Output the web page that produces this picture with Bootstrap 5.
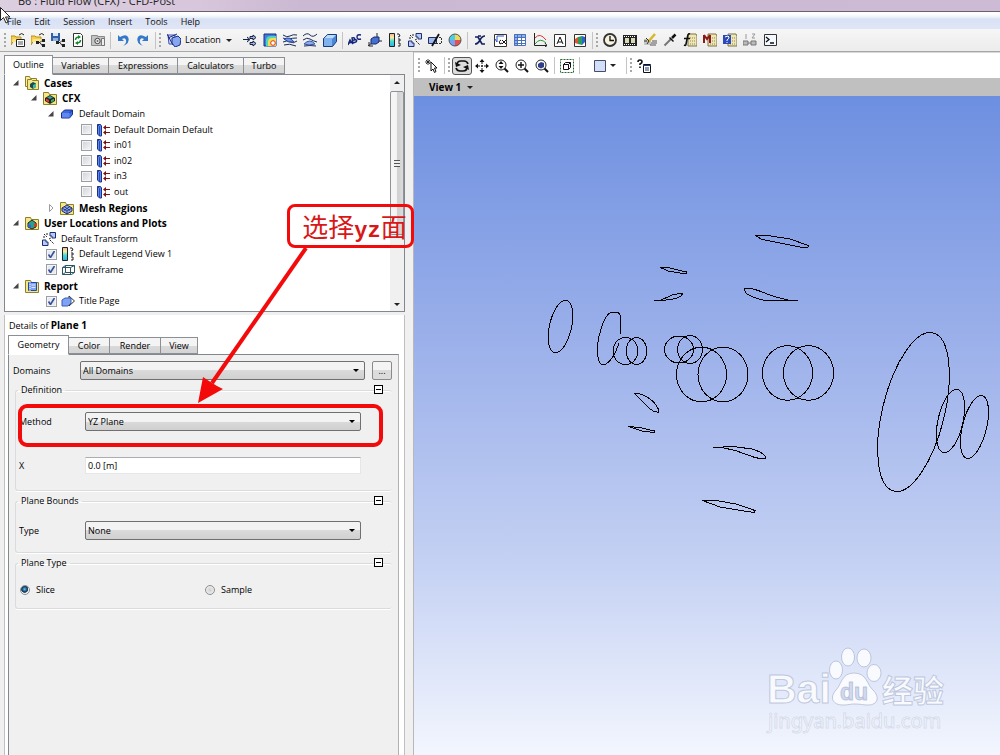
<!DOCTYPE html>
<html lang="en">
<head>
<meta charset="utf-8">
<meta name="viewport" content="width=device-width, initial-scale=1">
<title>B6 : Fluid Flow (CFX) - CFD-Post</title>
<link href="https://cdn.jsdelivr.net/npm/bootstrap@5.3.0/dist/css/bootstrap.min.css" rel="stylesheet">
<style>
  body { font: 9px/14px "Open Sans", "Noto Sans CJK SC", sans-serif; color: #000; background: #f0f0f0; overflow-x: hidden; }
  b, .tree-head { font-size: 10px; font-weight: 700; }
  button, select, input { font: inherit; color: inherit; }
  .title-strip { height: 12px; background: linear-gradient(90deg, #dccfe0, #d8c6dc 20%, #cbb8d2 30%, #cdbad4); border-bottom: 1px solid #6a6070; padding-left: 18px; }
  .title-strip span { font-size: 11px; line-height: 12px; margin-bottom: 4px; white-space: nowrap; color: #222; }
  .menu-strip { height: 17px; background: linear-gradient(#fff 0 2px, #eef2fb 5px, #d9e1f4 7px, #dfe6f7); gap: 13px; padding: 2px 7px 0; }
  .menu-strip a { color: #111; text-decoration: none; }
  .tool-strip { height: 23px; background: linear-gradient(#f6f6f6, #ececec); border-bottom: 1px solid #a8a8a8; padding-left: 3px; }
  .tool { width: 20px; height: 20px; padding: 0; border: 0; background: none; display: grid; place-items: center; flex: none; }
  .tool svg, .pic { width: 14px; height: 14px; flex: none; display: block; }
  .tool.pressed { border: 1px solid #555; border-radius: 3px; background: #ddd; height: 18px; }
  .wide-tool { width: 77px; display: flex; align-items: center; gap: 4px; padding: 0 4px; }
  .rule { width: 5px; height: 17px; flex: none; background: linear-gradient(90deg, transparent 2px, #c4c4c4 2px 3px, transparent 3px); }
  .grip { width: 5px; height: 17px; flex: none; background: radial-gradient(circle at 2px 2px, #a8a8a8 1px, transparent 1px) 0 0 / 5px 4px; }
  .caret { width: 0; height: 0; border: 3px solid transparent; border-top-color: #222; border-bottom: 0; flex: none; }
  .side { flex: 0 0 41.4%; padding: 3px 8px 0 4px; border-right: 1px solid #b8b8b8; }
  .tab-row { align-items: end; position: relative; z-index: 1; }
  .tab-row button { height: 17px; padding: 0; border: 1px solid #8c8f94; border-left-width: 0; background: linear-gradient(#f4f4f4 50%, #dadada 50%, #d4d4d4); line-height: 14px; flex: none; }
  .tab-row .picked { height: 20px; background: #fff; border-left-width: 1px; border-bottom-color: #fff; margin-bottom: -1px; }
  .w-a { width: 49px; } .w-b { width: 56px; } .w-c { width: 69px; } .w-d { width: 66px; } .w-e { width: 41px; }
  .w-f { width: 61px; } .w-g { width: 41px; } .w-h { width: 51px; } .w-i { width: 37px; }
  .tree-box { height: 238px; background: #fff; border: 1px solid #828790; }
  .tree { margin: 0 0 2px; }
  .tree li { flex: 1 1 0; display: flex; align-items: center; gap: 5px; min-height: 0; white-space: nowrap; }
  .d1 { padding-left: 7px; } .d2 { padding-left: 25px; } .d3 { padding-left: 42px; } .d4 { padding-left: 76px; } .d5 { padding-left: 37px; } .d6 { padding-left: 41px; }
  .tree li svg.twig { width: 8px; height: 8px; flex: none; }
  .tree label { display: flex; align-items: center; gap: 4px; }
  .tick { appearance: none; width: 11px; height: 11px; margin: 0; border: 1px solid #9a9ea6; flex: none; background: linear-gradient(135deg, #cfd2d6, #f6f6f6); box-shadow: inset 0 0 0 1px #f4f4f4; }
  .tick:checked { background: url("data:image/svg+xml,%3Csvg xmlns='http://www.w3.org/2000/svg' viewBox='0 0 9 9'%3E%3Cpath d='M1.5 4.5 3.5 7.5 7.5 1' fill='none' stroke='%23384f96' stroke-width='1.6'/%3E%3C/svg%3E") center / 9px 9px, #e6e9ef; }
  .scroll { width: 14px; background: #f0f0f0; padding-bottom: 5px; }
  .scroll .caret { margin: 0 auto; }
  .up { transform: rotate(180deg); margin-top: 6px !important; }
  .thumb { height: 144px; margin: 7px 0 auto; border: 1px solid #8f9297; border-radius: 2px; background: linear-gradient(90deg, #f5f5f5 45%, #cfcfd1 55%, #dcdcdc); display: grid; place-items: center; }
  .thumb i { width: 6px; height: 7px; background: repeating-linear-gradient(#555 0 1px, #eee 1px 3px); }
  .details { background: #fff; border: 1px solid #c0c0c0; border-top: 0; border-bottom: 0; margin-top: 3px; padding: 0 5px 0 3px; }
  .details h2 { font-size: 9px; line-height: 14px; margin: 3px 1px 2px; }
  .form-area { background: #f0f0f0; border: 1px solid #828790; border-right-color: #b0b0b0; border-bottom: 0; padding: 6px 6px 0 4px; }
  .pick { appearance: none; height: 19px; flex: 1; min-width: 0; border: 1px solid #707070; border-radius: 2px; padding: 0 2px; line-height: 16px;
    background: url("data:image/svg+xml,%3Csvg xmlns='http://www.w3.org/2000/svg' viewBox='0 0 6 3'%3E%3Cpath d='M0 0h6L3 3z'/%3E%3C/svg%3E") right 5px center / 6px 3px no-repeat, linear-gradient(#f3f3f3 50%, #dadada 50%, #d0d0d0); }
  .more { width: 20px; height: 19px; border: 1px solid #8a8a8a; border-radius: 2px; padding: 0; line-height: 14px; background: linear-gradient(#f4f4f4 50%, #dcdcdc 50%); margin-left: 7px; }
  .tag { width: 67px; flex: none; }
  .group { border: 1px solid #d9dbde; border-right: 0; border-radius: 3px; box-shadow: 0 1px #fff, inset 0 1px #fff; margin: 0 0 0 2px; padding: 0 31px 0 3px; position: relative; }
  .group legend { float: none; width: auto; font-size: 9px; line-height: 14px; margin: 0 0 0 -1px; padding: 0 3px; }
  .group .tag { width: 66px; }
  .fold { position: absolute; right: 9px; top: -12px; width: 9px; height: 9px; padding: 0; border: 1px solid #000; background: linear-gradient(#000, #000) center / 5px 1px no-repeat #fff; }
  .g1 { height: 108px; margin-top: 3px; } .g2 { height: 59px; margin-top: 3px; } .g3 { height: 53px; margin-top: 3px; }
  .g1 .first { margin-top: 15px; } .g1 .second { margin-top: 26px; } .g2 .first { margin-top: 13px; } .g3 .first { margin-top: 13px; margin-right: -28px; }
  .entry { height: 17px; flex: 1; min-width: 0; border: 1px solid #e4e6ea; border-top-color: #abadb3; padding: 0 2px; background: #fff; border-radius: 0; }
  .dot { appearance: none; width: 10px; height: 10px; border: 1px solid #8b8f94; border-radius: 50%; margin: 0 6px 0 1px; background: radial-gradient(#d0d0d0, #f8f8f8); }
  .dot:checked { background: radial-gradient(circle at 45% 40%, #6fc3ea 0, #123f66 40%, #1c4a70 50%, #f4f4f4 60%); }
  .note-frame { position: absolute; left: 18px; right: 30px; top: 352px; height: 43px; border: 4px solid #f30b0b; border-radius: 9px; pointer-events: none; }
  .note-text { position: absolute; right: -1px; top: 152px; width: 127px; height: 44px; border: 3px solid #f30b0b; border-radius: 8px; color: #d81818; font: 26px/38px "Noto Sans CJK SC", sans-serif; text-align: center; padding-left: 8px; white-space: nowrap; }
  .note-text b { font: 700 22px/38px "Liberation Mono", monospace; }
  .note-arrow { position: absolute; right: 97px; top: 195px; width: 120px; height: 158px; pointer-events: none; }
  .view-tools { height: 26px; background: #fff; border-top: 1px solid #d8d8d8; padding-left: 3px; }
  .view-name { height: 18px; background: #c0c0c0; padding-left: 15px; gap: 6px; border: 0; text-align: left; }
  .canvas { background: linear-gradient(#6d8fe0, #9fb3eb 40%, #c3d0f3 70%, #f3f6fe); }
  .canvas svg { width: 100%; display: block; }
  .pointer { position: absolute; left: 0; top: 7px; width: 12px; height: 17px; }
</style>
</head>
<body class="min-vh-100 d-flex flex-column position-relative">

<svg width="0" height="0" class="position-absolute" aria-hidden="true">
  <defs>
    <linearGradient id="rain" x2="0" y2="1"><stop stop-color="#f0b0a0"/><stop offset=".3" stop-color="#f6efa0"/><stop offset=".6" stop-color="#49d7d0"/><stop offset="1" stop-color="#28b4e8"/></linearGradient>
    <symbol id="fold0" viewBox="0 0 14 14"><path d="M0 3h4l1 1h5v3H3l-3 5z" fill="#f6cf4a" stroke="#b98f16"/><path d="M2 6h9l-2 3H1z" fill="#fbe48a"/><path d="M8 2q3-3 5 0" stroke="#222" fill="none"/></symbol>
    <symbol id="i-open" viewBox="0 0 14 14"><use href="#fold0"/><path d="M5.500 6.500h8v7h-8z" fill="#fff" stroke="#222"/><path d="M7 9h5M7 11h5" stroke="#555"/></symbol>
    <symbol id="i-net" viewBox="0 0 14 14"><path d="M7 9.500h2l2-2h2M9 9.500l2 3h2" fill="none" stroke="#222"/><path d="M5 8h3v3H5zM11 6h3v3h-3zM11 11h3v3h-3z" fill="#222"/></symbol>
    <symbol id="i-openc" viewBox="0 0 14 14"><use href="#fold0"/><use href="#i-net"/></symbol>
    <symbol id="i-save" viewBox="0 0 14 14"><path d="M0 0h9v8H0z" fill="#315fa8"/><path d="M2 0h5v3H2z" fill="#dce8f8"/><path d="M2 5h5v3H2z" fill="#8eb2e0"/><use href="#i-net"/></symbol>
    <symbol id="i-fresh" viewBox="0 0 14 14"><path d="M2.500.5h7l2 2v11h-9z" fill="#fff" stroke="#333"/><path d="M4.500 7q0-3 4-3M9.500 7q0 3-4 3" fill="none" stroke="#128a28" stroke-width="1.500"/><path d="M7 2l3 2-3 2zM7 8l-3 2 3 2z" fill="#128a28"/></symbol>
    <symbol id="i-cam" viewBox="0 0 14 14"><path d="M.5 2.500h6v1h7v9H.5z" fill="#c4c4c4" stroke="#8a8a8a"/><path d="M10.500 5.500h3v7h-3z" fill="#eee" stroke="#777"/><circle cx="6.500" cy="8" r="2.700" fill="#eee" stroke="#444"/><circle cx="6.500" cy="8" r="1" fill="#666"/></symbol>
    <symbol id="i-undo" viewBox="0 0 14 14"><path d="M2 2v6h6L6 6q3-2 4 1t-3 6q7-3 5.500-8T4 4z" fill="#3577c8"/></symbol>
    <symbol id="i-loc" viewBox="0 0 14 14"><path d="M1 2h7l-1 9H2z" fill="#cfdcff" stroke="#3c4fae"/><path d="M0 1l6 11M10 1L1 5" stroke="#182a80"/><path d="M5 5l6-2 3 3-1 6-5 2-3-4z" fill="#86a6ee" stroke="#1a2f8e"/></symbol>
    <symbol id="i-vec" viewBox="0 0 14 14"><path d="M0 6.500h6M4 4l3 2.500L4 9M7 3.500h3V2l3 2.500L10 7V5.500H7zM7 9.500h3V8l3 2.500-3 2.500v-1.500H7z" fill="#9fb4e8" stroke="#18213c"/></symbol>
    <symbol id="i-cont" viewBox="0 0 14 14"><path d="M1 1h12v12H1z" fill="#3f7be0" stroke="#18307a"/><path d="M3 13V7q0-4 5-4h5v10z" fill="#4fd3c0"/><path d="M5 13V9q0-4 4-4h4v8z" fill="#f2dd4e"/><circle cx="10" cy="10" r="2.300" fill="#fff" stroke="#d33"/></symbol>
    <symbol id="i-strm" viewBox="0 0 14 14"><path d="M0 2q4 3 7 1t7-1M0 5q3 2 6 1t8-1M0 9q4-2 7 0t7-1M1 12q5-2 12 1" fill="none" stroke="#1c2c58"/><path d="M1 6q6-3 10 3-6 1-10-3z" fill="#6f95e8" stroke="#26479c"/></symbol>
    <symbol id="i-part" viewBox="0 0 14 14"><path d="M0 3q4-4 7-1t7-1M0 7q4-3 7-1t7 3M1 13q6-1 12 0" fill="none" stroke="#1c2c58"/><path d="M1 11q6-6 11 0-6 2-11 0z" fill="#8eabec" stroke="#3656a8"/></symbol>
    <symbol id="i-cube" viewBox="0 0 14 14"><path d="M.5 5.500l4-4h9v7l-4 5h-9z" fill="#4c86d8" stroke="#173a78"/><path d="M1 5.500l3.500-3.500H13L9.500 5.500z" fill="#b9dcfa"/><path d="M1 6h8v7H1z" fill="#7fb2ee"/></symbol>
    <symbol id="i-abc" viewBox="0 0 14 14"><path d="M0 12l2-5 3 4M1 10l3-1M5 10L4 5q4-1 2 2 4-1 2 2l-3 1M13 2q-4-1-4 2t4 2" fill="none" stroke="#15257c" stroke-width="1.400"/></symbol>
    <symbol id="i-axes" viewBox="0 0 14 14"><path d="M9 0v5M14 8h-4M4 10l-4 3" stroke="#222"/><path d="M3 6l3-2h5v5l-3 2H3z" fill="#456fd0" stroke="#142a6e"/><path d="M1 9v4h4" fill="none" stroke="#222"/></symbol>
    <symbol id="i-leg" viewBox="0 0 14 14"><path d="M1.500.5h5v13h-5z" fill="url(#rain)" stroke="#222"/><path d="M9 1h2l1 2-2 1M10 6h2v2h-2M10 10h2v3h-2" fill="none" stroke="#222"/></symbol>
    <symbol id="i-trans" viewBox="0 0 14 14"><path d="M8 .5h5.500V6H10V4H8zM.5 8H4v2h2v3.500H.5z" fill="#b9caf8" stroke="#1b2f6e"/><path d="M2 2l3 3M8 8l4 4M1 5h2M5 1v2M7 7l2-1" stroke="#222" stroke-dasharray="2 1"/></symbol>
    <symbol id="i-clip" viewBox="0 0 14 14"><path d="M.5 4.500h8v6h-8z" fill="#9fb8ee" stroke="#1d2f66"/><path d="M8 4.500h5.500v6H7" fill="none" stroke="#333" stroke-dasharray="2 1"/><path d="M11 1L4 13" stroke="#111" stroke-width="1.800"/></symbol>
    <symbol id="i-wheel" viewBox="0 0 14 14"><circle cx="7" cy="7" r="6" fill="#49cfe0"/><path d="M7 7V1a6 6 0 0 1 6 6z" fill="#f0d85a"/><path d="M7 7h6a6 6 0 0 1-6 6z" fill="#e65050"/><path d="M7 7v6a6 6 0 0 1-6-6z" fill="#7aa0f0"/><circle cx="7" cy="7" r="6" fill="none" stroke="#555"/></symbol>
    <symbol id="i-x" viewBox="0 0 14 14"><path d="M2 4h3l4 7h3M12 3q-3 0-5 4t-5 4M5 3h3" fill="none" stroke="#15245c" stroke-width="1.700"/></symbol>
    <symbol id="i-expr" viewBox="0 0 14 14"><path d="M1.500 1.500h12v12h-12z" fill="#fff" stroke="#333"/><path d="M2 6l2 3V3h7" fill="none" stroke="#2a52cc"/><path d="M8 7q-3 1-1 4l2-1M9 7l4 4M13 7l-4 4" fill="none" stroke="#111"/></symbol>
    <symbol id="i-table" viewBox="0 0 14 14"><path d="M1 1h12v12H1z" fill="#fff"/><path d="M1 1h12v3H1zM1 1h3v12H1z" fill="#8db0ee"/><path d="M1.500 1.500h11v11h-11zM4.500 1v12M8.500 1v12M1 4.500h12M1 7.500h12M1 10.500h12" fill="none" stroke="#4a70b8"/></symbol>
    <symbol id="i-chart" viewBox="0 0 14 14"><path d="M1.500 0v12.500H14M12 10l2 2.500-2 1.500" fill="none" stroke="#222"/><path d="M2 5q5-6 11 2" fill="none" stroke="#d33"/><path d="M2 11q5-7 11-1" fill="none" stroke="#2a9a3a"/></symbol>
    <symbol id="i-text" viewBox="0 0 14 14"><path d="M1.500 1.500h11v12h-11z" fill="#fff" stroke="#333"/><path d="M4 11l3-7 3 7M5 9h4" fill="none" stroke="#111"/></symbol>
    <symbol id="i-fig" viewBox="0 0 14 14"><path d="M1.500 1.500h11v12h-11z" fill="#fff" stroke="#333"/><path d="M2 6l3-2v7l-3-1z" fill="#e0572f"/><path d="M5 4l4-1v9l-4-1z" fill="#2b9b64"/><path d="M9 3l3 1v5l-3 3z" fill="#2d63d0"/></symbol>
    <symbol id="i-clock" viewBox="0 0 14 14"><circle cx="7" cy="7" r="6" fill="#f7f3df" stroke="#333" stroke-width="1.800"/><path d="M7 3v4.500h4" fill="none" stroke="#111" stroke-width="1.300"/></symbol>
    <symbol id="i-film" viewBox="0 0 14 14"><path d="M0 2h14v11H0z" fill="#222"/><path d="M2 5h4v5H2zM8 5h4v5H8z" fill="#d8d8b8"/><path d="M1 3.500h12M1 11.500h12" stroke="#fff" stroke-dasharray="1 1"/></symbol>
    <symbol id="i-edit" viewBox="0 0 14 14"><path d="M1 6h7v6H1z" fill="#c5c5c5"/><path d="M9 8h5M8 10h6M7 12h6" stroke="#555"/><path d="M12 1L5 9" stroke="#d6b82a" stroke-width="2.500"/><path d="M3 5l3 3-2 3M1 8h3" stroke="#333" fill="none"/></symbol>
    <symbol id="i-probe" viewBox="0 0 14 14"><path d="M1.500 12.500l7-7" stroke="#777" stroke-width="2"/><path d="M6.500 4.500l4 4" stroke="#111" stroke-width="1.500"/><path d="M9 5l3.500-3.500" stroke="#111" stroke-width="2.500"/></symbol>
    <symbol id="i-calc" viewBox="0 0 14 14"><path d="M5 1h8l1 2v10H5z" fill="#efe6b4" stroke="#7d7544"/><path d="M7 5h6M7 8h6M7 11h6" stroke="#8d8558" stroke-dasharray="1 1"/></symbol>
    <symbol id="i-fn" viewBox="0 0 14 14"><use href="#i-calc"/><path d="M7 1Q5 0 4.500 4L3 11q0 2-2 1M1 5.500h6" fill="none" stroke="#111" stroke-width="1.600"/></symbol>
    <symbol id="i-mac" viewBox="0 0 14 14"><use href="#i-calc"/><path d="M1 2v8M7 2v8M1 2l3 4 3-4" fill="none" stroke="#8d1a1a" stroke-width="2"/></symbol>
    <symbol id="i-ask" viewBox="0 0 14 14"><use href="#i-calc"/><path d="M0 2h8v9H0z" fill="#2b49b8"/><path d="M2 4q4-2 4 0T4 7v1M4 9v1" fill="none" stroke="#fff"/></symbol>
    <symbol id="i-cmp" viewBox="0 0 14 14"><path d="M3 1v5M9 1h3l-3 4h3" fill="none" stroke="#999"/><path d="M0 8h5v4H0zM8 8h5v4H8zM5 10h3" fill="#bbb" stroke="#777"/></symbol>
    <symbol id="i-cmd" viewBox="0 0 14 14"><path d="M1.500 1.500h12v11h-12z" fill="#f4f8ff" stroke="#333"/><path d="M3 4l3 2.500L3 9M7 10h4" fill="none" stroke="#111" stroke-width="1.300"/></symbol>
    <symbol id="i-sel" viewBox="0 0 14 14"><path d="M3 0v6M0 3h6M1 1l4 4M5 1L1 5" stroke="#111" stroke-width=".8"/><path d="M6 3v9l2-2 1.500 3.500 1.500-1L9.500 9H12z" fill="#fff" stroke="#111"/></symbol>
    <symbol id="i-rot" viewBox="0 0 14 14"><path d="M2 6q0-4 4-4h3q3 0 4 3M12 8q0 4-4 4H5q-3 0-4-3" fill="none" stroke="#111" stroke-width="1.700"/><path d="M0 3l1 5 5-2zM14 11l-1-5-5 2z" fill="#111"/></symbol>
    <symbol id="i-pan" viewBox="0 0 14 14"><path d="M7 3v8M3 7h8" stroke="#111" stroke-dasharray="2 1"/><path d="M7 0l2.500 3h-5zM7 14l2.500-3h-5zM0 7l3-2.500v5zM14 7l-3-2.500v5z" fill="#111"/></symbol>
    <symbol id="i-lens" viewBox="0 0 14 14"><circle cx="6" cy="6" r="5" fill="#fff" stroke="#222"/><path d="M9.500 9.500L13 13" stroke="#111" stroke-width="2"/></symbol>
    <symbol id="i-zoom" viewBox="0 0 14 14"><use href="#i-lens"/><path d="M6 2l2.500 3h-5zM6 10L3.500 7h5z" fill="#111"/></symbol>
    <symbol id="i-plus" viewBox="0 0 14 14"><use href="#i-lens"/><path d="M6 3v6M3 6h6" stroke="#111" stroke-width="1.400"/></symbol>
    <symbol id="i-fit" viewBox="0 0 14 14"><use href="#i-lens"/><path d="M3 5l3-2 3 1v4L6 9.500 3 8z" fill="#2f3f8c"/></symbol>
    <symbol id="i-hi" viewBox="0 0 14 14"><path d="M.5 .5h13v13H.5z" fill="none" stroke="#2c6a2c" stroke-dasharray="2 1"/><path d="M3.500 5.500l2-2h5v5l-2 2h-5zM3.500 5.500h5v5M8.500 5.500l2-2" fill="#fff" stroke="#111"/></symbol>
    <symbol id="i-sq" viewBox="0 0 14 14"><path d="M1.500 1.500h11v11h-11z" fill="#d3def8" stroke="#444c66"/></symbol>
    <symbol id="i-what" viewBox="0 0 14 14"><path d="M1 3q0-2 2-2t2 2q0 1-2 2v1M3 7.500v1.500" fill="none" stroke="#111" stroke-width="1.600"/><path d="M6.500 5.500h7v8h-7z" fill="#fff" stroke="#111"/><path d="M6 6.500h8M8 9h4M8 11h4" stroke="#223a7a"/></symbol>
    <symbol id="t-fold" viewBox="0 0 14 14"><path d="M.5 1.500h5l1 2h7v10H.5z" fill="#f3e789" stroke="#8e8024"/></symbol>
    <symbol id="t-cases" viewBox="0 0 14 14"><path d="M.5 .5h4l1 2h6v8h-11z" fill="#f7eea2" stroke="#8e8024"/><path d="M2.500 3.500h4l1 1h6v9h-11z" fill="#f3e789" stroke="#8e8024"/><path d="M5 8l3-2 3 1.500V11l-3 2-3-2z" fill="#1e4a50"/><path d="M8 9l3-1.500V11l-3 2z" fill="#3fb8a0"/></symbol>
    <symbol id="t-cfx" viewBox="0 0 14 14"><use href="#t-fold"/><path d="M2 7l5-3 5 3v3l-5 3-5-3z" fill="#222"/><path d="M3 7.500l3 1.500v2.500L3 10z" fill="#e23b2e"/><path d="M4 6.500L7 5l3 1.500L7 8z" fill="#3fa0a0"/><path d="M8 9l3-1.500V10l-3 1.500z" fill="#2fae5a"/></symbol>
    <symbol id="t-mesh" viewBox="0 0 14 14"><use href="#t-fold"/><path d="M2 7l5-3 5 3v3l-5 3-5-3z" fill="#8fa6ec" stroke="#1d2d6c"/><path d="M2 7l5 3 5-3M7 10v3M4 5.500l6 4M10 5.500l-6 4" fill="none" stroke="#1d2d6c" stroke-width=".8"/></symbol>
    <symbol id="t-user" viewBox="0 0 14 14"><use href="#t-fold"/><path d="M3 7l4-3 4 3v4l-4 2-4-2z" fill="#2d9e8a" stroke="#222"/><path d="M9 8l3-1v3l-3 1z" fill="#d9382a"/><path d="M3 8l3 1v3l-3-1z" fill="#3660d8"/></symbol>
    <symbol id="t-rep" viewBox="0 0 14 14"><use href="#t-fold"/><path d="M3.500 3.500h8v8h-8z" fill="#7fa4f4" stroke="#2546a8"/><path d="M5 3v9" stroke="#fff" stroke-dasharray="1 1"/><path d="M6.500 6h4M6.500 8.500h4" stroke="#dfe8ff"/></symbol>
    <symbol id="t-dom" viewBox="0 0 14 14"><path d="M1.500 6l3-3h8v4.500l-3 3.500h-8z" fill="#3e68e0" stroke="#1a318c"/><path d="M2 6h7.500v4.500H2z" fill="#5f88f0"/><path d="M9.500 6l3-3" stroke="#1a318c"/></symbol>
    <symbol id="t-bnd" viewBox="0 0 14 14"><path d="M1.500 1.500h3l1 1.500v10h-2l-2-2z" fill="#5f8cf2" stroke="#1a318c"/><path d="M1.500 1.500l2 2v9.500" fill="none" stroke="#1a318c" stroke-width=".7"/><path d="M9 4.500h5M8 9.500h6" stroke="#7a1515" stroke-width="1.200"/><path d="M7 4.500l3-2.500v5zM7 9.500L10 7v5z" fill="#7a1515"/></symbol>
    <symbol id="t-wire" viewBox="0 0 14 14"><path d="M1.500 4.500l3-2h9v7l-3 2h-9zM1.500 4.500h8v7M9.500 4.500l4-2M4.500 2.500v7h9M4.500 9.500l-3 2" fill="none" stroke="#2c5664"/></symbol>
    <symbol id="t-page" viewBox="0 0 14 14"><path d="M8 2l5.500 5L8 12z" fill="#fff" stroke="#333"/><path d="M1 6l3-2h6v5l-3 3H1z" fill="#7fa4f4" stroke="#3a5cb0"/></symbol>
    <symbol id="t-down" viewBox="0 0 8 8"><path d="M6.500 1v5.500H1z" fill="#444"/></symbol>
    <symbol id="t-right" viewBox="0 0 8 8"><path d="M2.500 .5v7L6 4z" fill="#fff" stroke="#999"/></symbol>
  </defs>
</svg>

<header>
  <div class="title-strip d-flex align-items-end overflow-hidden"><span>B6 : Fluid Flow (CFX) - CFD-Post</span></div>
  <nav class="menu-strip d-flex align-items-center" aria-label="Menu">
    <a href="#">File</a><a href="#">Edit</a><a href="#">Session</a><a href="#">Insert</a><a href="#">Tools</a><a href="#">Help</a>
  </nav>
  <div class="tool-strip d-flex align-items-center" role="toolbar" aria-label="Main tools">
    <span class="grip"></span>
    <button class="tool" aria-label="Load results"><svg><use href="#i-open"/></svg></button>
    <button class="tool" aria-label="Load state"><svg><use href="#i-openc"/></svg></button>
    <button class="tool" aria-label="Save state"><svg><use href="#i-save"/></svg></button>
    <button class="tool" aria-label="Refresh"><svg><use href="#i-fresh"/></svg></button>
    <button class="tool" aria-label="Save picture"><svg><use href="#i-cam"/></svg></button>
    <span class="rule"></span>
    <button class="tool" aria-label="Undo"><svg><use href="#i-undo"/></svg></button>
    <button class="tool" aria-label="Redo"><svg viewBox="0 0 14 14"><use href="#i-undo" width="14" height="14" transform="matrix(-1 0 0 1 14 0)"/></svg></button>
    <span class="rule"></span><span class="grip"></span>
    <button class="tool wide-tool"><svg><use href="#i-loc"/></svg><span>Location</span><span class="caret ms-auto me-1"></span></button>
    <button class="tool" aria-label="Vector"><svg><use href="#i-vec"/></svg></button>
    <button class="tool" aria-label="Contour"><svg><use href="#i-cont"/></svg></button>
    <button class="tool" aria-label="Streamline"><svg><use href="#i-strm"/></svg></button>
    <button class="tool" aria-label="Particle track"><svg><use href="#i-part"/></svg></button>
    <button class="tool" aria-label="Volume rendering"><svg><use href="#i-cube"/></svg></button>
    <span class="rule"></span>
    <button class="tool" aria-label="Text"><svg><use href="#i-abc"/></svg></button>
    <button class="tool" aria-label="Coordinate frame"><svg><use href="#i-axes"/></svg></button>
    <button class="tool" aria-label="Legend"><svg><use href="#i-leg"/></svg></button>
    <button class="tool" aria-label="Instance transform"><svg><use href="#i-trans"/></svg></button>
    <button class="tool" aria-label="Clip plane"><svg><use href="#i-clip"/></svg></button>
    <button class="tool" aria-label="Color map"><svg><use href="#i-wheel"/></svg></button>
    <span class="rule"></span>
    <button class="tool" aria-label="Variable"><svg><use href="#i-x"/></svg></button>
    <button class="tool" aria-label="Expression"><svg><use href="#i-expr"/></svg></button>
    <button class="tool" aria-label="Table"><svg><use href="#i-table"/></svg></button>
    <button class="tool" aria-label="Chart"><svg><use href="#i-chart"/></svg></button>
    <button class="tool" aria-label="Comment"><svg><use href="#i-text"/></svg></button>
    <button class="tool" aria-label="Figure"><svg><use href="#i-fig"/></svg></button>
    <span class="rule"></span><span class="grip"></span>
    <button class="tool" aria-label="Timesteps"><svg><use href="#i-clock"/></svg></button>
    <button class="tool" aria-label="Animation"><svg><use href="#i-film"/></svg></button>
    <button class="tool" aria-label="Quick editor"><svg><use href="#i-edit"/></svg></button>
    <button class="tool" aria-label="Probe"><svg><use href="#i-probe"/></svg></button>
    <button class="tool" aria-label="Function calculator"><svg><use href="#i-fn"/></svg></button>
    <button class="tool" aria-label="Macro calculator"><svg><use href="#i-mac"/></svg></button>
    <button class="tool" aria-label="Mesh calculator"><svg><use href="#i-ask"/></svg></button>
    <button class="tool" aria-label="Compare"><svg><use href="#i-cmp"/></svg></button>
    <button class="tool" aria-label="Command editor"><svg><use href="#i-cmd"/></svg></button>
  </div>
</header>

<main class="d-flex flex-fill">
  <section class="side d-flex flex-column position-relative">
    <div class="tab-row d-flex">
      <button class="picked w-a">Outline</button><button class="w-b">Variables</button><button class="w-c">Expressions</button><button class="w-d">Calculators</button><button class="w-e">Turbo</button>
    </div>
    <div class="tree-box d-flex">
      <ul class="tree list-unstyled d-flex flex-column flex-fill">
        <li class="d1 tree-head"><svg class="twig"><use href="#t-down"/></svg><svg class="pic"><use href="#t-cases"/></svg>Cases</li>
        <li class="d2 tree-head"><svg class="twig"><use href="#t-down"/></svg><svg class="pic"><use href="#t-cfx"/></svg>CFX</li>
        <li class="d3"><svg class="twig"><use href="#t-down"/></svg><svg class="pic"><use href="#t-dom"/></svg>Default Domain</li>
        <li class="d4"><label><input type="checkbox" class="tick"><svg class="pic"><use href="#t-bnd"/></svg>Default Domain Default</label></li>
        <li class="d4"><label><input type="checkbox" class="tick"><svg class="pic"><use href="#t-bnd"/></svg>in01</label></li>
        <li class="d4"><label><input type="checkbox" class="tick"><svg class="pic"><use href="#t-bnd"/></svg>in02</label></li>
        <li class="d4"><label><input type="checkbox" class="tick"><svg class="pic"><use href="#t-bnd"/></svg>in3</label></li>
        <li class="d4"><label><input type="checkbox" class="tick"><svg class="pic"><use href="#t-bnd"/></svg>out</label></li>
        <li class="d3 tree-head"><svg class="twig"><use href="#t-right"/></svg><svg class="pic"><use href="#t-mesh"/></svg>Mesh Regions</li>
        <li class="d1 tree-head"><svg class="twig"><use href="#t-down"/></svg><svg class="pic"><use href="#t-user"/></svg>User Locations and Plots</li>
        <li class="d5"><svg class="pic"><use href="#i-trans"/></svg>Default Transform</li>
        <li class="d6"><label><input type="checkbox" class="tick" checked><svg class="pic"><use href="#i-leg"/></svg>Default Legend View 1</label></li>
        <li class="d6"><label><input type="checkbox" class="tick" checked><svg class="pic"><use href="#t-wire"/></svg>Wireframe</label></li>
        <li class="d1 tree-head"><svg class="twig"><use href="#t-down"/></svg><svg class="pic"><use href="#t-rep"/></svg>Report</li>
        <li class="d6"><label><input type="checkbox" class="tick" checked><svg class="pic"><use href="#t-page"/></svg>Title Page</label></li>
      </ul>
      <div class="scroll d-flex flex-column"><span class="caret up"></span><div class="thumb"><i></i></div><span class="caret"></span></div>
    </div>

    <div class="details d-flex flex-column flex-fill">
      <h2>Details of <b>Plane 1</b></h2>
      <div class="tab-row d-flex">
        <button class="picked w-f">Geometry</button><button class="w-g">Color</button><button class="w-h">Render</button><button class="w-i">View</button>
      </div>
      <form class="form-area flex-fill">
        <div class="d-flex align-items-center">
          <label class="tag" for="domains">Domains</label>
          <select id="domains" class="pick"><option>All Domains</option></select>
          <button type="button" class="more">...</button>
        </div>
        <fieldset class="group g1">
          <legend>Definition</legend><button type="button" class="fold" aria-label="Collapse Definition"></button>
          <div class="d-flex align-items-center first"><label class="tag" for="method">Method</label><select id="method" class="pick"><option>YZ Plane</option></select></div>
          <div class="d-flex align-items-center second"><label class="tag" for="xpos">X</label><input id="xpos" class="entry" value="0.0 [m]"></div>
        </fieldset>
        <fieldset class="group g2">
          <legend>Plane Bounds</legend><button type="button" class="fold" aria-label="Collapse Plane Bounds"></button>
          <div class="d-flex align-items-center first"><label class="tag" for="btype">Type</label><select id="btype" class="pick"><option>None</option></select></div>
        </fieldset>
        <fieldset class="group g3">
          <legend>Plane Type</legend><button type="button" class="fold" aria-label="Collapse Plane Type"></button>
          <div class="row g-0 first">
            <label class="col-6 d-flex align-items-center"><input type="radio" name="ptype" class="dot" checked>Slice</label>
            <label class="col-6 d-flex align-items-center"><input type="radio" name="ptype" class="dot">Sample</label>
          </div>
        </fieldset>
      </form>
    </div>

    <svg class="note-arrow" viewBox="0 0 120 158" aria-hidden="true"><path d="M110 1L16 136" stroke="#f30b0b" stroke-width="4"/><path d="M2 156l5-26 6 4 8 5 6 3z" fill="#f30b0b"/></svg>
    <div class="note-frame"></div>
    <div class="note-text">选择<b>yz</b>面</div>
  </section>

  <section class="flex-fill d-flex flex-column">
    <div class="view-tools d-flex align-items-center" role="toolbar" aria-label="View tools">
      <span class="grip"></span>
      <button class="tool" aria-label="Select"><svg><use href="#i-sel"/></svg></button>
      <span class="rule"></span><span class="grip"></span>
      <button class="tool pressed" aria-label="Rotate"><svg><use href="#i-rot"/></svg></button>
      <button class="tool" aria-label="Pan"><svg><use href="#i-pan"/></svg></button>
      <button class="tool" aria-label="Zoom"><svg><use href="#i-zoom"/></svg></button>
      <button class="tool" aria-label="Zoom box"><svg><use href="#i-plus"/></svg></button>
      <button class="tool" aria-label="Fit view"><svg><use href="#i-fit"/></svg></button>
      <span class="rule"></span>
      <button class="tool" aria-label="Toggle highlight"><svg><use href="#i-hi"/></svg></button>
      <span class="rule"></span>
      <button class="tool ms-2" aria-label="Viewport layout"><svg><use href="#i-sq"/></svg></button>
      <span class="caret me-1"></span>
      <span class="rule ms-1"></span><span class="grip"></span>
      <button class="tool" aria-label="Help"><svg><use href="#i-what"/></svg></button>
    </div>
    <button class="view-name d-flex align-items-center"><b>View 1</b><span class="caret"></span></button>
    <div class="canvas flex-fill">
      <svg viewBox="414 96 586 659" role="img" aria-label="Wireframe view">
        <g fill="none" stroke="#000" stroke-width="1" shape-rendering="crispEdges">
          <ellipse cx="560.500" cy="326.500" rx="11" ry="26.800" transform="rotate(13 560.500 326.500)"/>
          <path d="M620.500 334V318Q620 312 616 312H612Q606 313 601 329T598 357Q599 364 602 364.500L606 364Q614 359 619 343"/>
          <ellipse cx="625.500" cy="351" rx="12.500" ry="13.500"/><ellipse cx="636.500" cy="351" rx="10.300" ry="13.500"/>
          <ellipse cx="679" cy="349.500" rx="14.500" ry="13.500"/><ellipse cx="690" cy="349.500" rx="12.500" ry="14"/>
          <ellipse cx="701.500" cy="374.500" rx="25" ry="27.300"/><ellipse cx="723" cy="374.500" rx="25" ry="27.300"/>
          <ellipse cx="787.500" cy="373" rx="25" ry="27.300"/><ellipse cx="808.500" cy="373" rx="25" ry="27.300"/>
          <ellipse cx="913.500" cy="412" rx="31" ry="81.500" transform="rotate(13.900 913.500 412)"/>
          <ellipse cx="950.500" cy="421" rx="12.500" ry="32.300" transform="rotate(12.700 950.500 421)"/>
          <ellipse cx="974.500" cy="427" rx="12" ry="32.300" transform="rotate(14 974.500 427)"/>
          <path d="M755.500 235.500H768L790 239 808.500 245.500 808 247.500 800 247 780 243 762 239.500Z"/>
          <path d="M660.500 267.500L670 268 686.500 272 686 273.500 680 273 668 271Z"/>
          <path d="M653.500 300.500H660L672 295 682 293Q683 296 677 298T660 300.500"/>
          <path d="M797.500 300.500H765Q744 296 744.500 289 750 287 762 292T790 300.500"/>
          <path d="M634.500 393.500Q642 393 650 399T659 412Q654 413 648 407T634.500 393.500Z"/>
          <path d="M628.500 426.500L640 427.500 654.500 431 654 432.500 642 431Z"/>
          <path d="M713.500 447.500L733 446.500 752 449Q765 453 766 458 760 460 748 455T722 447.500"/>
          <path d="M702.500 500.500H716L736 504 755 510.500 754.500 512.500 744 511 720 507Z"/>
        </g>
        <g fill="#fff" fill-opacity=".8" stroke="#a9b4d0" stroke-opacity=".7" stroke-width="1">
          <text x="767" y="703" font-family="Liberation Sans" font-weight="700" font-size="41">Bai</text>
          <path d="M854 673C841 673 841 686 836 690 829 698 833 705 843 705 849 705 849 704 855 704S862 705 868 705C878 705 880 697 873 690 867 685 867 673 854 673Z"/>
          <ellipse cx="836" cy="670" rx="6.500" ry="9"/><ellipse cx="848" cy="657" rx="6.500" ry="9"/><ellipse cx="864" cy="658" rx="7" ry="9"/><ellipse cx="874" cy="673" rx="7" ry="8.500"/>
          <text x="840" y="700" font-family="Liberation Sans" font-weight="700" font-size="23" fill="#c8d2ee">du</text>
          <text x="882" y="702" font-family="Noto Sans CJK SC" font-weight="700" font-size="31">经验</text>
          <text x="768" y="728" font-family="Noto Sans" font-size="20" stroke-opacity=".4">jingyan.baidu.com</text>
        </g>
      </svg>
    </div>
  </section>
</main>
<svg class="pointer" viewBox="0 0 12 17" aria-hidden="true"><path d="M.5.5v13l3-3 2.500 5.500 2-1-2.500-5H10z" fill="#fff" stroke="#222"/></svg>
<script src="https://cdn.jsdelivr.net/npm/bootstrap@5.3.0/dist/js/bootstrap.bundle.min.js"></script>
</body>
</html>
